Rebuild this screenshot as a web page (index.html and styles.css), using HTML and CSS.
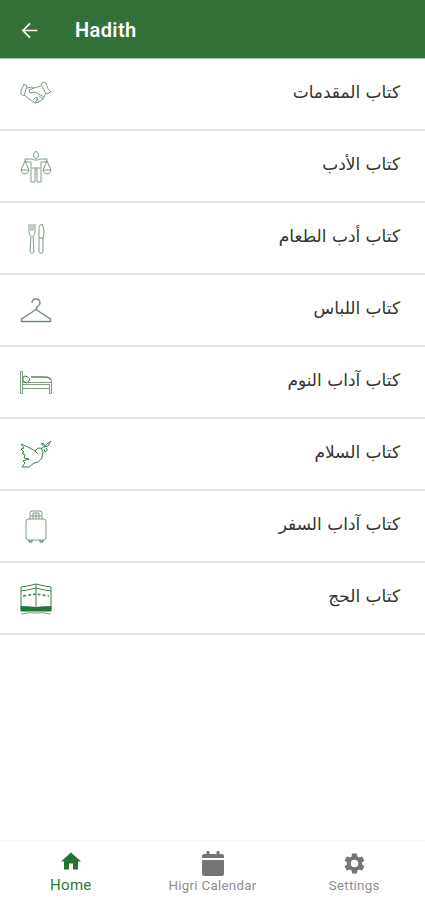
FILE: index.html
```
<!DOCTYPE html>
<html lang="en">
<head>
<meta charset="utf-8">
<title>Hadith</title>
<link rel="stylesheet" href="styles.css">
</head>
<body>
<div class="app">
  <header class="bar">
    <svg class="back" viewBox="0 0 18 18"><path d="M17 9H2M9 1.500 1.500 9 9 16.500"/></svg>
    <h1>Hadith</h1>
  </header>
  <main class="list">
    <div class="row">
      <svg class="icon" viewBox="0 0 34 34"><path d="M5 6 8 8 5 18 2 16 2 13ZM25 4l-3 2 5 10 5-2-3-3-2-6ZM8 10l5-1 2 1 7-2M5 17l5 4 6 4 4-1 4-3 3-6M15 10l-5 2 1 3 5-1 9 5M20 18l4 3M17 21l4 3M14 22l3-3 2 1-3 5"/></svg>
      <span class="name" lang="ar">كتاب المقدمات</span>
    </div>
    <div class="row">
      <svg class="icon" viewBox="0 0 34 34"><path d="M17 1.500q2.500 0 2.500 3.500T17 8.500 14.500 5 17 1.500M6 9h7l2 1h4l2-1h7v3h-6v20h-4V19h-2v13h-4V12H6ZM6 11l-4 9M6 11l4 9M28 11l-4 9M28 11l4 9M2 20h8q-1 4-4 4t-4-4M24 20h8q-1 4-4 4t-4-4M13 18h8"/></svg>
      <span class="name" lang="ar">كتاب الأدب</span>
    </div>
    <div class="row">
      <svg class="icon" viewBox="0 0 34 34"><path d="M10 2v8q0 3 2 4l-1 16q2 3 4 0l-1-16q2-1 2-4V2M12 2v7M14 2v7M20 16V6q1-4 3-4 2 4 2 8l-1 6v14q-2 3-4 0V16h4"/></svg>
      <span class="name" lang="ar">كتاب أدب الطعام</span>
    </div>
    <div class="row">
      <svg class="icon" viewBox="0 0 34 34"><path class="wire" d="M13 9q0-4 4-4t4 4q0 2-3 4l-1 3M17 15.500 2.500 25v2.500h29V25L17 15.500"/></svg>
      <span class="name" lang="ar">كتاب اللباس</span>
    </div>
    <div class="row">
      <svg class="icon" viewBox="0 0 34 34"><path d="M1.500 5.500h2v22h-2ZM3.500 18.500h27v4h-27M30.500 22v5.500h2V15q0-4-4-4H12M4 16.500h28"/><path class="dark" d="M6 10l3 1q3 1 1 4l-2 2-4-2V11ZM12 11h15q3 0 4 3"/></svg>
      <span class="name" lang="ar">كتاب آداب النوم</span>
    </div>
    <div class="row">
      <svg class="icon" viewBox="0 0 34 34"><path class="dark" d="M2 6l9 4 5 3q2-4 6-3l2 4-1 6q-3 5-8 5l-5 4H3l3-4-2-2 6-2-5-1 1-3-3-2 2-1-3-3 3-1ZM16 13l3 3M22 11l6-5 4-3-3 5-4 1M22 6q2-2 2 2M27 10q3 2-1 4l-1-3M24 5l2 3"/></svg>
      <span class="name" lang="ar">كتاب السلام</span>
    </div>
    <div class="row">
      <svg class="icon" viewBox="0 0 34 34"><path d="M9 9h16q2 0 2 3v15q0 3-2 3H9q-2 0-2-3V12q0-3 2-3M11 9V3q0-2 2-2h8q2 0 2 2v6M14 9V3h6v6M11 6h12M17 3v6"/><path class="dark" d="M10 30v2h3v-2M21 30v2h3v-2"/></svg>
      <span class="name" lang="ar">كتاب آداب السفر</span>
    </div>
    <div class="row">
      <svg class="icon" viewBox="0 0 34 34"><path class="dark" d="M2 27V5q8-1 15-3 7 2 15 3v22M17 2v23M2 9q8-1 15-3 7 2 15 3"/><path class="dash" d="M4 14q7-1 13-2 6 1 13 2"/><path class="fill" d="M1.500 24q8 0 15.500 1 8-1 15.500-1v5.500h-31Z"/><path d="M2 32q8-2 15-1 7-1 15 1"/></svg>
      <span class="name" lang="ar">كتاب الحج</span>
    </div>
  </main>
  <nav class="tabs">
    <a class="tab active">
      <svg class="glyph home" viewBox="2 3 20 17"><path d="M10 20v-6h4v6h5v-8h3L12 3 2 12h3v8z"/></svg>
      <span>Home</span>
    </a>
    <a class="tab">
      <svg class="glyph calendar" viewBox="0 0 22 25"><path d="M0 7V5q0-2 2-2h2.500V1q0-1 1-1h1q1 0 1 1v2h7V1q0-1 1-1h1q1 0 1 1v2H20q2 0 2 2v2ZM0 9h22v13.500q0 2.500-2 2.500H2q-2 0-2-2.500Z"/></svg>
      <span>Higri Calendar</span>
    </a>
    <a class="tab">
      <svg class="glyph gear" viewBox="2 2 20 20"><path d="M19.140 12.940c.04-.3.06-.61.06-.94 0-.32-.02-.64-.07-.94l2.030-1.580c.18-.14.23-.41.12-.61l-1.920-3.320c-.12-.22-.37-.29-.59-.22l-2.390.96c-.5-.38-1.030-.7-1.620-.94L14.400 2.810c-.04-.24-.24-.41-.48-.41h-3.840c-.24 0-.43.17-.47.41L9.250 5.350c-.59.24-1.130.57-1.620.94l-2.390-.96c-.22-.08-.47 0-.59.22L2.740 8.870c-.12.21-.08.47.12.61l2.030 1.580c-.05.3-.09.63-.09.94s.02.64.07.94l-2.030 1.580c-.18.14-.23.41-.12.61l1.920 3.320c.12.22.37.29.59.22l2.390-.96c.5.38 1.030.7 1.620.94l.36 2.540c.05.24.24.41.48.41h3.840c.24 0 .44-.17.47-.41l.36-2.540c.59-.24 1.130-.56 1.620-.94l2.390.96c.22.08.47 0 .59-.22l1.920-3.320c.12-.22.07-.47-.12-.61zM12 15.600a3.600 3.600 0 1 1 0-7.200 3.600 3.600 0 0 1 0 7.200z"/></svg>
      <span>Settings</span>
    </a>
  </nav>
</div>
</body>
</html>
```
FILE: styles.css
```
body {
  margin: 0;
  background: #fff;
  font-family: Roboto, "DejaVu Sans", sans-serif;
}
.app {
  display: flex;
  flex-direction: column;
  height: 900px;
}
.bar {
  box-sizing: border-box;
  display: flex;
  align-items: center;
  gap: 36px;
  height: 59px;
  padding: 2px 21px 0;
  background: #32713a;
  border-bottom: 1px solid #a9c6ac;
  color: #fff;
}
.back {
  width: 18px;
  height: 17px;
  fill: none;
  stroke: #fff;
  stroke-width: 1.8;
}
h1 {
  margin: 0;
  font-size: 20px;
  font-weight: 600;
  letter-spacing: 0.4px;
  line-height: 24px;
}
.list {
  flex: 1;
}
.row {
  box-sizing: border-box;
  display: flex;
  align-items: center;
  justify-content: space-between;
  height: 72px;
  padding: 2px 25px 0 19px;
  border-bottom: 2px solid #e6e6e6;
}
.icon {
  width: 34px;
  height: 34px;
  fill: none;
  stroke: #809c85;
  stroke-width: 1;
  stroke-linejoin: round;
}
.icon .wire {
  stroke: #6d8c73;
  stroke-width: 1.4;
}
.icon .dark {
  stroke: #3f7f4b;
}
.icon .dash {
  stroke: #3f7f4b;
  stroke-width: 1.5;
  stroke-dasharray: 3 2;
}
.icon .fill {
  fill: #23763a;
  stroke: none;
}
.name {
  direction: rtl;
  padding-bottom: 6px;
  font-family: "DejaVu Sans", sans-serif;
  font-size: 17px;
  line-height: 24px;
  color: #333;
}
.tabs {
  box-sizing: border-box;
  display: flex;
  height: 60px;
  border-top: 1px solid #f7f7f7;
}
.tab {
  flex: 1;
  display: flex;
  flex-direction: column;
  align-items: center;
  justify-content: flex-end;
  padding-bottom: 6px;
  font-size: 13.3px;
  letter-spacing: 0.3px;
  line-height: 16px;
  color: #8c8c8c;
}
.tab.active {
  padding-bottom: 7px;
  font-size: 15px;
  color: #2c7537;
}
.glyph {
  fill: #757575;
}
.home {
  width: 20px;
  height: 18px;
  margin-bottom: 7px;
  fill: #23722d;
}
.calendar {
  width: 22px;
  height: 25px;
  margin-bottom: 2px;
}
.gear {
  width: 21px;
  height: 21px;
  margin-bottom: 4px;
}
```
